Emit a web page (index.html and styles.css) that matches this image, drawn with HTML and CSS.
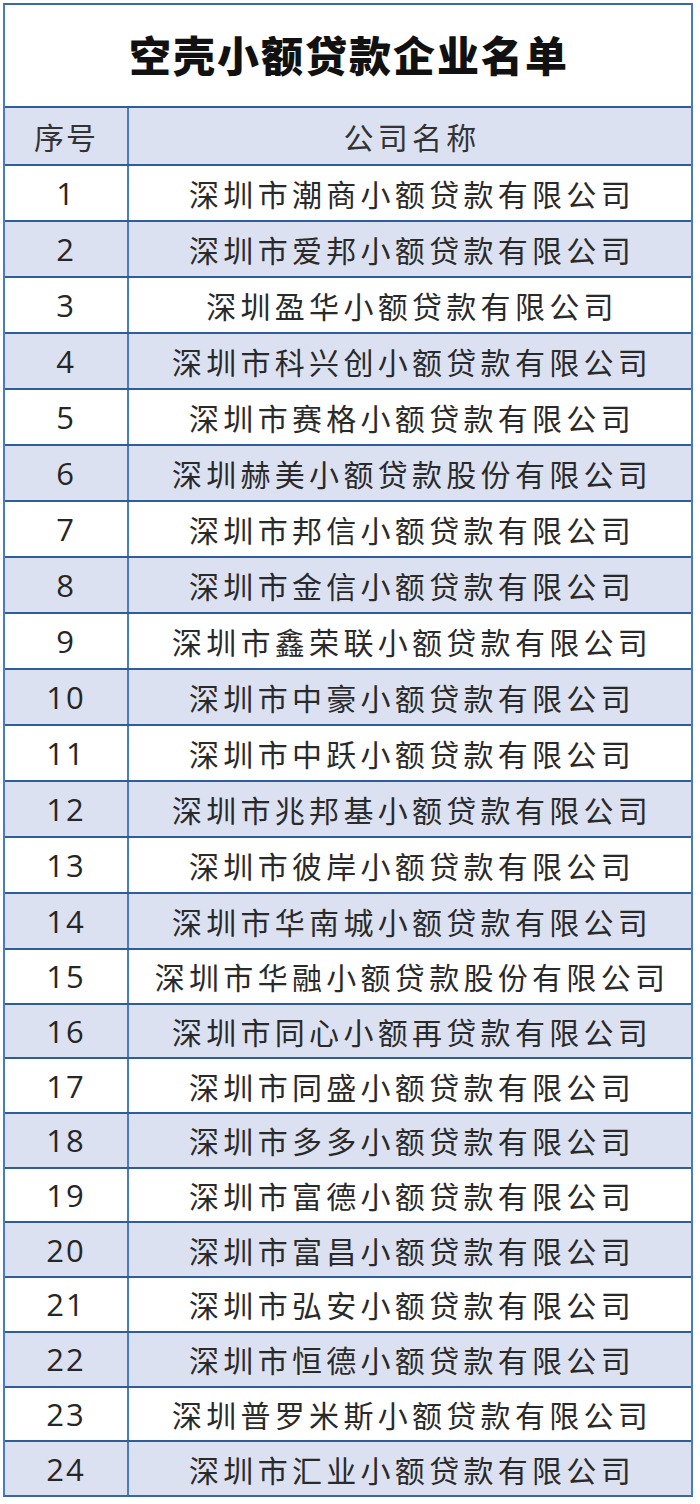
FILE: index.html
```html
<!DOCTYPE html>
<html lang="zh-CN">
<head>
<meta charset="utf-8">
<title>空壳小额贷款企业名单</title>
<link rel="stylesheet" href="styles.css">
</head>
<body>
<div class="sheet">
  <div class="title">空壳小额贷款企业名单</div>
  <div class="row head"><div class="num">序号</div><div class="name">公司名称</div></div>
  <div class="row"><div class="num">1</div><div class="name">深圳市潮商小额贷款有限公司</div></div>
  <div class="row"><div class="num">2</div><div class="name">深圳市爱邦小额贷款有限公司</div></div>
  <div class="row"><div class="num">3</div><div class="name">深圳盈华小额贷款有限公司</div></div>
  <div class="row"><div class="num">4</div><div class="name">深圳市科兴创小额贷款有限公司</div></div>
  <div class="row"><div class="num">5</div><div class="name">深圳市赛格小额贷款有限公司</div></div>
  <div class="row"><div class="num">6</div><div class="name">深圳赫美小额贷款股份有限公司</div></div>
  <div class="row"><div class="num">7</div><div class="name">深圳市邦信小额贷款有限公司</div></div>
  <div class="row"><div class="num">8</div><div class="name">深圳市金信小额贷款有限公司</div></div>
  <div class="row"><div class="num">9</div><div class="name">深圳市鑫荣联小额贷款有限公司</div></div>
  <div class="row"><div class="num">10</div><div class="name">深圳市中豪小额贷款有限公司</div></div>
  <div class="row"><div class="num">11</div><div class="name">深圳市中跃小额贷款有限公司</div></div>
  <div class="row"><div class="num">12</div><div class="name">深圳市兆邦基小额贷款有限公司</div></div>
  <div class="row"><div class="num">13</div><div class="name">深圳市彼岸小额贷款有限公司</div></div>
  <div class="row"><div class="num">14</div><div class="name">深圳市华南城小额贷款有限公司</div></div>
  <div class="row short"><div class="num">15</div><div class="name">深圳市华融小额贷款股份有限公司</div></div>
  <div class="row short"><div class="num">16</div><div class="name">深圳市同心小额再贷款有限公司</div></div>
  <div class="row short"><div class="num">17</div><div class="name">深圳市同盛小额贷款有限公司</div></div>
  <div class="row short"><div class="num">18</div><div class="name">深圳市多多小额贷款有限公司</div></div>
  <div class="row short"><div class="num">19</div><div class="name">深圳市富德小额贷款有限公司</div></div>
  <div class="row short"><div class="num">20</div><div class="name">深圳市富昌小额贷款有限公司</div></div>
  <div class="row short"><div class="num">21</div><div class="name">深圳市弘安小额贷款有限公司</div></div>
  <div class="row short"><div class="num">22</div><div class="name">深圳市恒德小额贷款有限公司</div></div>
  <div class="row short"><div class="num">23</div><div class="name">深圳普罗米斯小额贷款有限公司</div></div>
  <div class="row short last"><div class="num">24</div><div class="name">深圳市汇业小额贷款有限公司</div></div>
</div>
</body>
</html>
```

FILE: styles.css
```css
html, body {
  margin: 0;
  padding: 0;
  background: #ffffff;
}

body {
  width: 700px;
  font-family: "Noto Sans CJK SC", "Noto Sans", sans-serif;
  color: #2e2e2e;
}

.sheet {
  margin: 3px 0 0 3px;
  width: 690px;
  box-sizing: border-box;
  border: 2px solid #3b67a3;
  border-left-color: #4a7bbd;
  border-right-color: #4a7bbd;
}

.title {
  height: 103px;
  box-sizing: border-box;
  border-bottom: 2px solid #2f5d96;
  display: flex;
  align-items: center;
  justify-content: center;
  font-size: 42px;
  font-weight: 900;
  letter-spacing: 2px;
  color: #111111;
  padding-left: 2px;
  padding-bottom: 4px;
}

.row {
  display: grid;
  grid-template-columns: 124px 1fr;
  height: 56px;
  box-sizing: border-box;
  border-bottom: 2px solid #2f5d96;
  background: #ffffff;
}

.row.head {
  height: 58px;
}

.row.short {
  height: 54.7px;
}

.row.last {
  border-bottom: 0;
  height: 52.7px;
}

.row:nth-child(even) {
  background: #dce1f1;
}

.num {
  border-right: 2px solid #4a7bbd;
  display: flex;
  align-items: center;
  justify-content: center;
  font-family: "Open Sans", "Noto Sans", sans-serif;
  font-size: 31px;
  letter-spacing: 2px;
  color: #262626;
}

.name {
  display: flex;
  align-items: center;
  justify-content: center;
  font-size: 30px;
  letter-spacing: 4.3px;
  padding-left: 4px;
  color: #2a2a2a;
}

.head .num {
  font-family: "Noto Sans CJK SC", sans-serif;
  font-size: 30px;
  letter-spacing: 2px;
  color: #333333;
}

.head .name {
  color: #333333;
}
```
